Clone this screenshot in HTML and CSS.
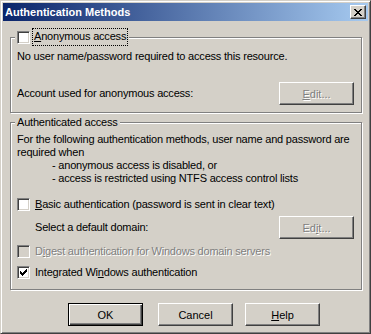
FILE: index.html
```html
<!DOCTYPE html>
<html lang="en">
<head>
<meta charset="UTF-8">
<title>Authentication Methods</title>
<link rel="stylesheet" href="styles.css">
</head>
<body>
<div class="window">
  <div class="titlebar">
    <span class="title">Authentication Methods</span>
    <button class="close-btn" aria-label="Close">
      <svg width="8" height="7" viewBox="0 0 8 7" shape-rendering="crispEdges">
        <path d="M0 0h2v1H0zM6 0h2v1H6zM1 1h2v1H1zM5 1h2v1H5zM2 2h4v1H2zM3 3h2v1H3zM2 4h4v1H2zM1 5h2v1H1zM5 5h2v1H5zM0 6h2v1H0zM6 6h2v1H6z" fill="#000"/>
      </svg>
    </button>
  </div>

  <div class="dialog-body">
    <!-- Anonymous group -->
    <fieldset class="group">
      <legend class="group-legend">
        <span class="checkbox"></span>
        <span class="focus-label"><u>A</u>nonymous access</span>
      </legend>
      <div class="line">No user name/password required to access this resource.</div>
      <div class="row account-row">
        <span>Account used for anonymous access:</span>
        <button class="btn" disabled><span class="disabled-text"><u>E</u>dit...</span></button>
      </div>
    </fieldset>

    <!-- Authenticated group -->
    <fieldset class="group group-auth">
      <legend class="group-legend plain">Authenticated access</legend>
      <div class="line">For the following authentication methods, user name and password are</div>
      <div class="line">required when</div>
      <div class="line indent">- anonymous access is disabled, or</div>
      <div class="line indent">- access is restricted using NTFS access control lists</div>

      <div class="check-row basic-row">
        <span class="checkbox"></span>
        <span><u>B</u>asic authentication (password is sent in clear text)</span>
      </div>
      <div class="row domain-row">
        <span>Select a default domain:</span>
        <button class="btn" disabled><span class="disabled-text">Ed<u>i</u>t...</span></button>
      </div>
      <div class="check-row digest-row">
        <span class="checkbox disabled"></span>
        <span class="disabled-text">D<u>i</u>gest authentication for Windows domain servers</span>
      </div>
      <div class="check-row integrated-row">
        <span class="checkbox">
          <svg width="7" height="7" viewBox="0 0 7 7" shape-rendering="crispEdges">
            <path d="M6 0h1v1H6zM5 1h2v1H5zM0 2h1v1H0zM4 2h3v1H4zM0 3h2v1H0zM3 3h3v1H3zM0 4h5v1H0zM1 5h3v1H1zM2 6h1v1H2z" fill="#000"/>
          </svg>
        </span>
        <span>Integrated Wi<u>n</u>dows authentication</span>
      </div>
    </fieldset>

    <div class="button-row">
      <button class="btn default">OK</button>
      <button class="btn">Cancel</button>
      <button class="btn"><u>H</u>elp</button>
    </div>
  </div>
</div>
</body>
</html>
```

FILE: styles.css
```css
body {
    margin: 0;
    padding: 0;
    font-family: "Liberation Sans", Arial, sans-serif;
    font-size: 11px;
    line-height: 13px;
    letter-spacing: -0.2px;
    color: #000;
}

.window {
    width: 371px;
    height: 334px;
    box-sizing: border-box;
    background-color: #D4D0C8;
    border: 1px solid;
    border-color: #D4D0C8 #404040 #404040 #D4D0C8;
    box-shadow: inset 1px 1px #fff, inset -1px -1px #808080;
    padding: 2px;
    display: flex;
    flex-direction: column;
}

/* Title bar */
.titlebar {
    height: 18px;
    display: flex;
    align-items: center;
    justify-content: space-between;
    background: linear-gradient(to right, #0A246A, #A6CAF0);
    padding: 0 2px 0 2px;
}

.title {
    color: #fff;
    font-weight: bold;
    font-size: 11px;
    letter-spacing: 0;
}

.close-btn {
    width: 16px;
    height: 14px;
    padding: 0;
    margin: 0;
    display: flex;
    align-items: center;
    justify-content: center;
    background-color: #D4D0C8;
    border: 1px solid;
    border-color: #fff #404040 #404040 #fff;
    box-shadow: inset -1px -1px #808080;
}

.close-btn svg {
    display: block;
    margin-left: -1px;
}

.dialog-body {
    padding: 0 6px 0 7px;
}

/* Group boxes */
.group {
    margin: 8px 0 0 0;
    padding: 5px 7px 7px 6px;
    border: 1px solid #808080;
    box-shadow: inset 1px 1px #fff, 1px 1px #fff;
    min-width: 0;
}

.group-auth {
    margin-top: 3px;
    padding-top: 4px;
    padding-bottom: 10px;
}

.group-legend {
    margin-left: -2px;
    padding: 0 2px;
    height: 16px;
    display: flex;
    align-items: center;
    background-color: #D4D0C8;
}

.group-legend.plain {
    height: 13px;
    display: block;
}

.group-legend .checkbox {
    margin-right: 3px;
}

.focus-label {
    outline: 1px dotted #000;
    outline-offset: 0;
    padding: 1px 1px 2px 1px;
    line-height: 13px;
}

.line {
    white-space: nowrap;
}

.indent {
    padding-left: 35px;
}

.row {
    display: flex;
    align-items: center;
    justify-content: space-between;
}

.account-row {
    margin-top: 19px;
}

/* Buttons */
.btn {
    width: 75px;
    height: 23px;
    padding: 0;
    font-family: "Liberation Sans", Arial, sans-serif;
    font-size: 11px;
    color: #000;
    background-color: #D4D0C8;
    border: 1px solid;
    border-color: #fff #404040 #404040 #fff;
    box-shadow: inset -1px -1px #808080;
}

.btn.default {
    border: 1px solid #000;
    box-shadow: inset 1px 1px #fff, inset -1px -1px #404040, inset -2px -2px #808080;
}

.disabled-text {
    color: #808080;
    text-shadow: 1px 1px #fff;
}

/* Checkboxes */
.checkbox {
    width: 13px;
    height: 13px;
    box-sizing: border-box;
    flex: none;
    display: flex;
    align-items: center;
    justify-content: center;
    background-color: #fff;
    border: 1px solid;
    border-color: #808080 #fff #fff #808080;
    box-shadow: inset 1px 1px #404040, inset -1px -1px #D4D0C8;
}

.checkbox.disabled {
    background-color: #D4D0C8;
}

.check-row {
    display: flex;
    align-items: center;
    gap: 5px;
    white-space: nowrap;
}

.basic-row {
    margin-top: 13px;
}

.domain-row {
    margin-top: 5px;
    padding-left: 18px;
}

.digest-row {
    margin-top: 6px;
}

.integrated-row {
    margin-top: 8px;
}

.button-row {
    display: flex;
    margin-top: 13px;
    padding-left: 58px;
    gap: 15px;
}

.button-row .btn:last-child {
    margin-left: -3px;
}
```
